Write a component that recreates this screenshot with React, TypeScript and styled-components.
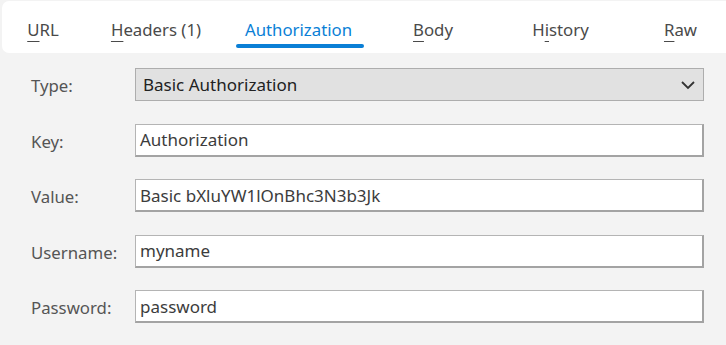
import * as React from "react"
import styled, { createGlobalStyle } from "styled-components"

const GlobalStyle = createGlobalStyle`
    html, body {
        margin: 0;
        padding: 0;
        background: #f3f3f3;
    }
    body {
        font-family: "Noto Sans", "Open Sans", sans-serif;
        width: 726px;
        height: 345px;
        overflow: hidden;
    }
`

const Page = styled.div`
    display: flex;
    flex-direction: column;
    width: 726px;
    height: 345px;
    background: #f3f3f3;
`

const TabBar = styled.div`
    display: flex;
    align-items: stretch;
    height: 52px;
    margin: 1px -12px 0 2px;
    background: #ffffff;
    border-radius: 7px;
`

const Tab = styled.div<{ width: number; active?: boolean }>`
    position: relative;
    display: flex;
    align-items: center;
    justify-content: center;
    width: ${p => p.width}px;
    padding-top: 5px;
    box-sizing: border-box;
    font-size: 16.8px;
    color: ${p => p.active ? '#0a7fd6' : '#4a4a4a'};
    cursor: pointer;
`

const Underline = styled.span`
    position: absolute;
    left: 50%;
    bottom: 5px;
    width: 128px;
    height: 4px;
    margin-left: -63px;
    border-radius: 2px;
    background: #0a7fd6;
`

const Key = styled.span`
    text-decoration: underline;
    text-decoration-thickness: 1px;
    text-underline-offset: 5px;
`

const Form = styled.div`
    display: flex;
    flex-direction: column;
    gap: 22.5px;
    padding: 15px 0 0 31px;
`

const Row = styled.div`
    display: flex;
    align-items: center;
    height: 33px;
`

const Label = styled.label`
    width: 104px;
    flex-shrink: 0;
    font-size: 16.8px;
    color: #555555;
    padding-top: 2px;
`

const Field = styled.div`
    display: flex;
    align-items: center;
    width: 569px;
    height: 33px;
    box-sizing: border-box;
    padding: 0 4px;
    background: #ffffff;
    border: 1px solid #b4b4b4;
    border-right: 2px solid #a3a3a3;
    border-bottom: 2px solid #a3a3a3;
    font-size: 17px;
    color: #3c3c3c;
`

const Select = styled(Field)`
    justify-content: space-between;
    padding: 0 7px;
    background: #e1e1e1;
    border: 1px solid #adadad;
    color: #222222;
`

const Chevron = () => (
    <svg width="16" height="10" viewBox="0 0 16 10">
        <path d="M2 2 L8 8 L14 2" fill="none" stroke="#333" strokeWidth="1.8" />
    </svg>
)

const tabs: { label: React.ReactNode; width: number; active?: boolean }[] = [
    { label: <><Key>U</Key>RL</>, width: 82 },
    { label: <><Key>H</Key>eaders (1)</>, width: 144 },
    { label: 'Authorization', width: 141, active: true },
    { label: <><Key>B</Key>ody</>, width: 128 },
    { label: <>H<Key>i</Key>story</>, width: 127 },
    { label: <><Key>R</Key>aw</>, width: 113 },
]

const fields = [
    { label: 'Key:', value: 'Authorization' },
    { label: 'Value:', value: 'Basic bXluYW1lOnBhc3N3b3Jk' },
    { label: 'Username:', value: 'myname' },
    { label: 'Password:', value: 'password' },
]

const App = (): JSX.Element => {
    return (
        <Page>
            <GlobalStyle />
            <TabBar>
                {tabs.map((t, i) => (
                    <Tab key={i} width={t.width} active={t.active}>
                        {t.label}
                        {t.active && <Underline />}
                    </Tab>
                ))}
            </TabBar>
            <Form>
                <Row>
                    <Label>Type:</Label>
                    <Select>
                        Basic Authorization
                        <Chevron />
                    </Select>
                </Row>
                {fields.map(f => (
                    <Row key={f.label}>
                        <Label>{f.label}</Label>
                        <Field>{f.value}</Field>
                    </Row>
                ))}
            </Form>
        </Page>
    )
}

export default App
